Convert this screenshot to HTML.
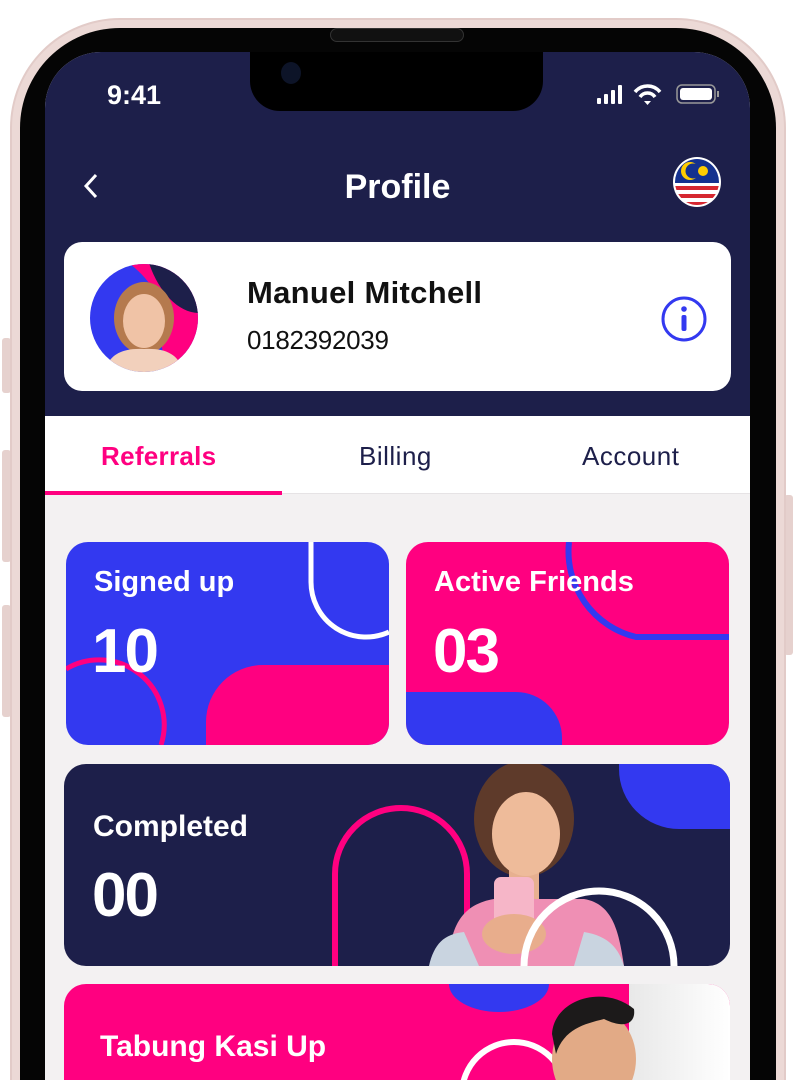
<!DOCTYPE html>
<html style="height:1080px;overflow:hidden"><head><meta charset="utf-8"><style>
*{margin:0;padding:0;box-sizing:border-box}
body{width:795px;height:1080px;background:#fff;position:relative;overflow:hidden;font-family:"Liberation Sans",sans-serif}
.abs{position:absolute}
.frame{left:10px;top:18px;width:776px;height:1062px;border-radius:110px 110px 0 0;background:#ecd9d6;border:2px solid #e2cbc8;border-bottom:none}
.black{left:20px;top:28px;width:756px;height:1052px;border-radius:100px 100px 0 0;background:#050505}
.screen{left:45px;top:52px;width:705px;height:1028px;border-radius:56px 56px 0 0;background:#f3f1f2;overflow:hidden}
.btn{background:#e6d1ce;border-radius:3px}
.card{position:absolute;border-radius:22px;overflow:hidden}
.lbl{position:absolute;color:#fff;font-weight:bold;font-size:29px}
.num{position:absolute;color:#fff;font-weight:bold;font-size:62px;letter-spacing:-2px}
</style></head><body>
<div class="abs btn" style="left:2px;top:338px;width:9px;height:55px"></div>
<div class="abs btn" style="left:2px;top:450px;width:9px;height:112px"></div>
<div class="abs btn" style="left:2px;top:605px;width:9px;height:112px"></div>
<div class="abs btn" style="left:784px;top:495px;width:9px;height:160px"></div>
<div class="abs frame"></div>
<div class="abs black"></div>
<div class="abs" style="left:330px;top:28px;width:134px;height:14px;border-radius:7px;background:#111;border:1px solid #333"></div>
<div class="abs screen">
  <div class="abs" style="left:0;top:0;width:705px;height:364px;background:#1d1f4a"></div>
  <div class="abs" style="left:205px;top:-5px;width:293px;height:64px;background:#000;border-radius:0 0 30px 30px"></div>
  <div class="abs" style="left:236px;top:10px;width:20px;height:22px;border-radius:50%;background:#0d1428"></div>
  <div class="abs" style="left:62px;top:28px;color:#fff;font-size:27px;font-weight:bold">9:41</div>
  <svg class="abs" style="left:550px;top:30px" width="130" height="26">
    <rect x="2" y="16" width="4" height="6" rx="1" fill="#fff"/><rect x="9" y="12" width="4" height="10" rx="1" fill="#fff"/><rect x="16" y="8" width="4" height="14" rx="1" fill="#fff"/><rect x="23" y="3" width="4" height="19" rx="1" fill="#fff"/>
    <path d="M40 10 A16 16 0 0 1 65 10" stroke="#fff" stroke-width="3.5" fill="none"/>
    <path d="M45 15 A9 9 0 0 1 60 15" stroke="#fff" stroke-width="3.5" fill="none"/>
    <path d="M49 19 L52.5 23 L56 19 Z" fill="#fff"/>
    <rect x="82" y="3" width="38" height="18" rx="5" stroke="#999" stroke-width="1.5" fill="none"/>
    <rect x="85" y="6" width="32" height="12" rx="3" fill="#fff"/>
    <rect x="122" y="9" width="2" height="6" fill="#999"/>
  </svg>
  <svg class="abs" style="left:36px;top:120px" width="20" height="30"><path d="M15 3 L5 14 L15 25" stroke="#fff" stroke-width="3" fill="none"/></svg>
  <div class="abs" style="left:0;width:705px;top:116px;text-align:center;color:#fff;font-size:34px;font-weight:bold">Profile</div>
  <svg class="abs" style="left:627px;top:104px" width="50" height="52">
    <defs><clipPath id="fc"><ellipse cx="25" cy="26" rx="22" ry="23"/></clipPath></defs>
    <ellipse cx="25" cy="26" rx="24" ry="25" fill="#fff"/>
    <g clip-path="url(#fc)"><rect x="0" y="0" width="50" height="50" fill="#fff"/>
    <rect x="0" y="0" width="50" height="27" fill="#14318f"/>
    <rect x="0" y="30" width="50" height="4" fill="#d62730"/><rect x="0" y="38" width="50" height="4" fill="#d62730"/><rect x="0" y="46" width="50" height="4" fill="#d62730"/>
    <circle cx="18" cy="15" r="9" fill="#ffcc00"/><circle cx="21" cy="15" r="7.5" fill="#14318f"/>
    <circle cx="31" cy="15" r="5" fill="#ffcc00"/></g>
  </svg>
  <div class="abs" style="left:19px;top:190px;width:667px;height:149px;background:#fff;border-radius:18px">
    <svg class="abs" style="left:25px;top:21px" width="110" height="110">
      <defs><clipPath id="av"><circle cx="55" cy="55" r="54"/></clipPath></defs>
      <g clip-path="url(#av)"><rect width="110" height="110" fill="#3339f0"/>
      <path d="M40 0 H110 V110 H80 C60 60 90 40 40 0Z" fill="#ff0080"/>
      <path d="M60 0 H110 V50 C90 50 70 30 60 0Z" fill="#1d1f4a"/>
      <ellipse cx="55" cy="55" rx="30" ry="36" fill="#b57a4e"/>
      <ellipse cx="55" cy="58" rx="21" ry="27" fill="#f0c3a6"/>
      <path d="M15 110 C20 90 35 85 55 86 C75 85 90 90 95 110Z" fill="#f2d0bc"/></g>
    </svg>
    <div class="abs" style="left:183px;top:33px;font-size:31px;font-weight:bold;color:#111;letter-spacing:0.3px">Manuel Mitchell</div>
    <div class="abs" style="left:183px;top:83px;font-size:26px;color:#111;letter-spacing:-0.3px">0182392039</div>
    <svg class="abs" style="left:596px;top:53px" width="48" height="48"><circle cx="24" cy="24" r="21" stroke="#3339f0" stroke-width="3" fill="none"/><circle cx="24" cy="14" r="2.8" fill="#3339f0"/><rect x="21.5" y="20" width="5" height="16" rx="2" fill="#3339f0"/></svg>
  </div>
  <div class="abs" style="left:0;top:364px;width:705px;height:78px;background:#fff;border-bottom:1px solid #e6e3e5"></div>
  <div class="abs" style="left:56px;top:389px;font-size:26px;font-weight:bold;color:#ff0080;letter-spacing:0.3px">Referrals</div>
  <div class="abs" style="left:314px;top:389px;font-size:26px;color:#1d1f4a;letter-spacing:0.5px">Billing</div>
  <div class="abs" style="left:537px;top:389px;font-size:26px;color:#1d1f4a;letter-spacing:0.5px">Account</div>
  <div class="abs" style="left:0;top:439px;width:237px;height:4px;background:#ff0080"></div>
  <div class="card" style="left:21px;top:490px;width:323px;height:203px;background:#3339f0">
    <svg class="abs" style="left:0;top:0" width="323" height="203">
      <path d="M245 0 V40 A55 55 0 0 0 323 90" stroke="#fff" stroke-width="5" fill="none"/>
      <path d="M140 203 V180 A57 57 0 0 1 197 123 H323 V203Z" fill="#ff0080"/>
      <path d="M0 127 A65 65 0 0 1 95 203" stroke="#ff0080" stroke-width="5" fill="none"/>
    </svg>
    <div class="lbl" style="left:28px;top:24px">Signed up</div>
    <div class="num" style="left:26px;top:74px">10</div>
  </div>
  <div class="card" style="left:361px;top:490px;width:323px;height:203px;background:#ff0080">
    <svg class="abs" style="left:0;top:0" width="323" height="203">
      <path d="M163 0 A88 88 0 0 0 230 95 H323" stroke="#3339f0" stroke-width="6" fill="none"/>
      <path d="M0 150 H110 A46 46 0 0 1 156 196 V203 H0Z" fill="#3339f0"/>
    </svg>
    <div class="lbl" style="left:28px;top:24px">Active Friends</div>
    <div class="num" style="left:27px;top:74px">03</div>
  </div>
  <div class="card" style="left:19px;top:712px;width:666px;height:202px;background:#1d1f4a">
    <svg class="abs" style="left:0;top:0" width="666" height="202">
      <path d="M555 0 H666 V65 H615 A60 60 0 0 1 555 5Z" fill="#3339f0"/>
      <path d="M271 202 V110 A66 66 0 0 1 403 110 V202" stroke="#ff0080" stroke-width="6" fill="none"/>
      <path d="M385 202 C385 160 400 140 430 135 L520 135 C550 140 555 170 560 202Z" fill="#ef8fb4"/>
      <path d="M365 202 C370 180 380 170 400 168 L415 202Z M520 168 C545 172 555 185 560 202 L510 202Z" fill="#c9d4e0"/>
      <ellipse cx="460" cy="55" rx="50" ry="58" fill="#5e3a2a"/>
      <rect x="445" y="95" width="30" height="40" fill="#e7b090"/>
      <ellipse cx="462" cy="70" rx="34" ry="42" fill="#eebb9a"/>
      <rect x="430" y="113" width="40" height="70" rx="7" fill="#f6b6c8"/>
      <ellipse cx="450" cy="170" rx="32" ry="20" fill="#e8ad8c"/>
      <path d="M460 202 A75 75 0 0 1 610 202" stroke="#fff" stroke-width="7" fill="none"/>
    </svg>
    <div class="lbl" style="left:29px;top:46px;font-size:30px">Completed</div>
    <div class="num" style="left:28px;top:96px">00</div>
  </div>
  <div class="card" style="left:19px;top:932px;width:666px;height:96px;background:#ff0080;border-radius:22px 22px 0 0">
    <svg class="abs" style="left:0;top:0" width="666" height="96">
      <defs><linearGradient id="g" x1="0" x2="1"><stop offset="0" stop-color="#e8e8e8"/><stop offset="1" stop-color="#fff"/></linearGradient></defs>
      <rect x="565" y="0" width="101" height="96" fill="url(#g)"/>
      <path d="M385 0 A50 28 0 0 0 485 0Z" fill="#3339f0"/>
      <path d="M398 200 V110 A52 52 0 0 1 502 110" stroke="#fff" stroke-width="6" fill="none"/>
      <ellipse cx="530" cy="75" rx="42" ry="50" fill="#e2aa86"/>
      <path d="M488 50 C490 15 540 0 570 25 C572 40 560 45 540 35 C520 40 500 45 492 70Z" fill="#1c1a1a"/>
    </svg>
    <div class="lbl" style="left:36px;top:46px;font-size:30px">Tabung Kasi Up</div>
  </div>
</div>
</body></html>
